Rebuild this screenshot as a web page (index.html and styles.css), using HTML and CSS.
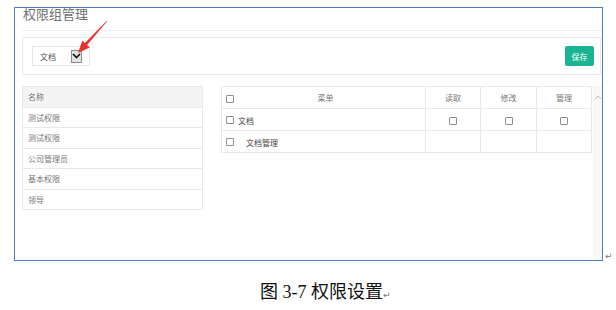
FILE: index.html
```html
<!DOCTYPE html>
<html lang="zh-CN">
<head>
  <meta charset="UTF-8" />
  <title>权限设置</title>
  <link rel="stylesheet" href="styles.css">
</head>
<body>
  <div class="shot-row">
    <div class="frame">
      <h1 class="title">权限组管理</h1>
      <div class="toolbar">
        <div class="select">
          <span class="select-text">文档</span>
          <span class="select-btn">
            <svg width="9" height="6" viewBox="0 0 9 6"><path d="M1 1 L4.5 4.5 L8 1" fill="none" stroke="#111" stroke-width="1.6"/></svg>
          </span>
        </div>
        <button class="save-btn">保存</button>
      </div>
      <div class="content">
        <div class="group-list">
          <div class="group-head">名称</div>
          <div class="group-item">测试权限</div>
          <div class="group-item">测试权限</div>
          <div class="group-item">公司管理员</div>
          <div class="group-item">基本权限</div>
          <div class="group-item">领导</div>
        </div>
        <table class="perm-table">
          <colgroup>
            <col style="width:204px">
            <col style="width:55px">
            <col style="width:56px">
            <col style="width:55px">
          </colgroup>
          <tr class="perm-head">
            <td class="menu-cell"><span class="cb"></span><span class="menu-head">菜单</span></td>
            <td>读取</td>
            <td>修改</td>
            <td>管理</td>
          </tr>
          <tr>
            <td class="menu-cell"><span class="cb"></span><span class="menu-name">文档</span></td>
            <td><span class="cb"></span></td>
            <td><span class="cb"></span></td>
            <td><span class="cb"></span></td>
          </tr>
          <tr>
            <td class="menu-cell"><span class="cb"></span><span class="menu-name sub">文档管理</span></td>
            <td></td>
            <td></td>
            <td></td>
          </tr>
        </table>
        <div class="scrollbar">
          <svg width="8" height="5" viewBox="0 0 8 5"><path d="M1 4 L4 1 L7 4" fill="none" stroke="#bbb" stroke-width="1"/></svg>
        </div>
      </div>
      <svg class="arrow" width="120" height="60" viewBox="0 0 120 60">
        <polygon points="107.2,21.2 87.1,45 89.7,47.4 78,53 82.3,40.6 84.9,43 106.8,20.8" fill="#e8322c"/>
      </svg>
    </div>
    <span class="mark">↵</span>
  </div>
  <p class="caption">图 3-7 权限设置<span class="mark">↵</span></p>
</body>
</html>
```

FILE: styles.css
```css
body {
  margin: 0;
  background: #fff;
  font-family: "Noto Sans CJK SC", sans-serif;
}
.shot-row {
  display: flex;
  align-items: flex-end;
  padding: 7px 0 0 14px;
}
.frame {
  width: 589px;
  height: 254px;
  box-sizing: border-box;
  border: 1px solid #4a7ebd;
  display: flex;
  flex-direction: column;
}
.title {
  margin: -1px 0 0 7px;
  padding: 0 0 10px 1px;
  font-size: 13px;
  line-height: 13px;
  font-weight: normal;
  color: #6f6f6f;
  border-bottom: 1px solid #eef0f1;
}
.toolbar {
  margin: 6px 1px 0 7px;
  padding: 8px 6px 8px 9px;
  border: 1px solid #e7eaec;
  border-radius: 2px;
  display: flex;
  justify-content: space-between;
  align-items: center;
}
.select {
  width: 58px;
  height: 20px;
  box-sizing: border-box;
  border: 1px solid #e5e6e7;
  padding-left: 7px;
  display: flex;
  align-items: center;
}
.select-text {
  width: 31px;
  font-size: 8px;
  color: #555;
}
.select-btn {
  width: 11px;
  height: 13px;
  box-sizing: border-box;
  border: 1px solid #8c8c8c;
  background: #e2e2e2;
  display: flex;
  align-items: center;
  justify-content: center;
}
.save-btn {
  width: 29px;
  height: 20px;
  padding: 0;
  border: none;
  border-radius: 2px;
  background: #1ab394;
  color: #fff;
  font-family: inherit;
  font-size: 8px;
}
.content {
  flex: 1;
  display: flex;
  margin: 11px 0 0 7px;
  gap: 18px;
}
.group-list {
  width: 182px;
  align-self: flex-start;
  box-sizing: border-box;
  border: 1px solid #e7eaec;
  font-size: 8px;
  color: #777;
}
.group-head,
.group-item {
  height: 19.4px;
  line-height: 19px;
  padding-left: 5px;
}
.group-head {
  height: 20px;
  line-height: 20px;
  background: #f3f3f4;
}
.group-item {
  border-top: 1px solid #e7eaec;
}
.perm-table {
  width: 370px;
  align-self: flex-start;
  border-collapse: collapse;
  table-layout: fixed;
  font-size: 8px;
  color: #777;
}
.perm-table td {
  height: 21px;
  padding: 0;
  border: 1px solid #e7eaec;
  text-align: center;
  vertical-align: middle;
}
.perm-table .menu-cell {
  text-align: left;
  padding-left: 4px;
  position: relative;
}
.cb {
  display: inline-block;
  width: 8px;
  height: 8px;
  box-sizing: border-box;
  border: 1px solid #8f8f8f;
  border-radius: 1px;
  vertical-align: middle;
}
.menu-head {
  position: absolute;
  left: 0;
  right: 0;
  top: 5px;
  text-align: center;
  padding-left: 4px;
}
.menu-name {
  margin-left: 4px;
  color: #444;
  vertical-align: middle;
}
.menu-name.sub {
  margin-left: 12px;
}
.scrollbar {
  width: 9px;
  margin-left: -17px;
  background: #f8f8f8;
  display: flex;
  justify-content: center;
  padding-top: 9px;
}
.scrollbar svg {
  display: block;
}
.arrow {
  position: absolute;
  left: 0;
  top: 0;
}
.mark {
  font-family: "DejaVu Sans", sans-serif;
  font-size: 9px;
  color: #777;
  line-height: 10px;
  margin-left: 2px;
}
.caption {
  margin: 21px 0 0 260px;
  font-family: "Liberation Serif", "Noto Sans CJK SC", serif;
  font-size: 18px;
  line-height: 20px;
  color: #111;
}
.caption .mark {
  margin-left: 0;
}
```
